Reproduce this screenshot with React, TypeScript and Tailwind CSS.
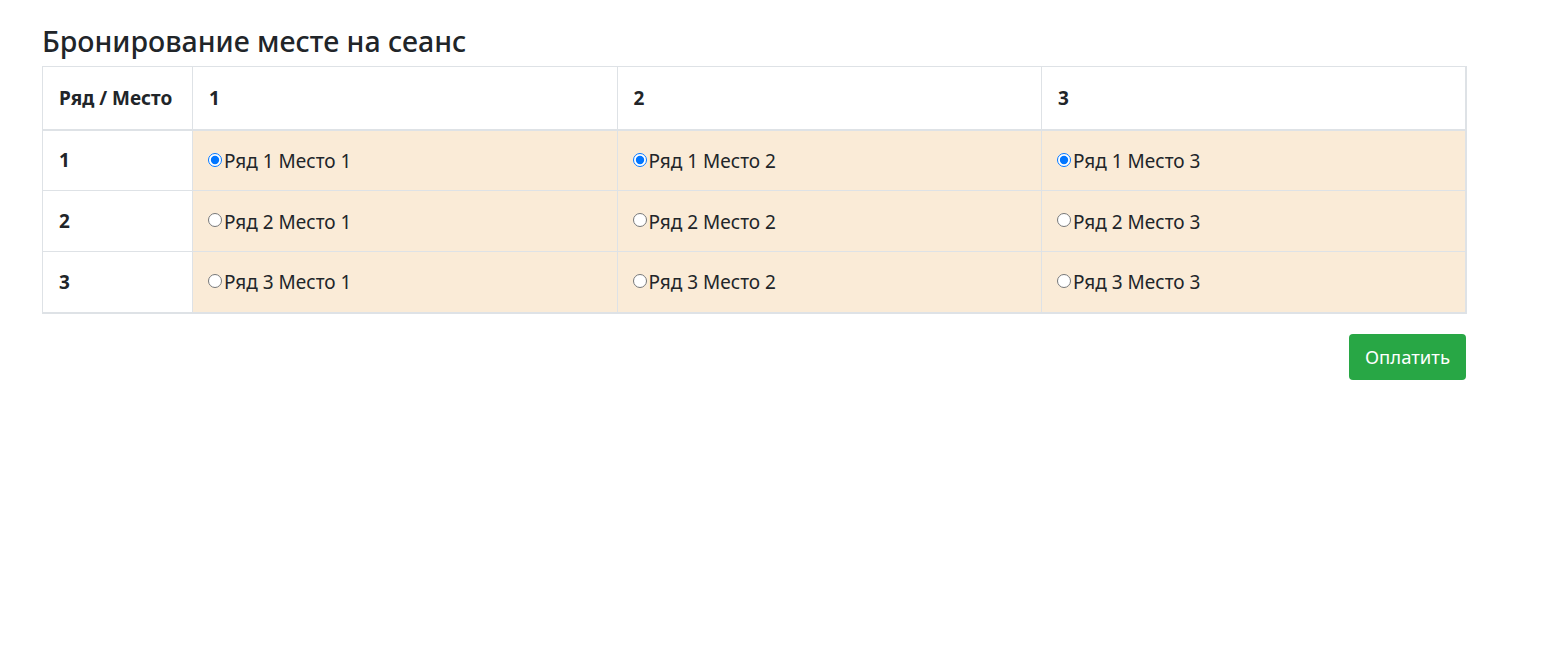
const rows = [1, 2, 3];
const seats = [1, 2, 3];

const font = { fontFamily: "'Noto Sans', 'Open Sans', sans-serif" };

export default function App() {
  return (
    <div className="min-h-[670px] bg-white text-[#212529]" style={font}>
      <div className="pl-[42px] pt-[24px] w-[1467px]">
        <h3 className="text-[28.5px] leading-[1.2] font-medium mb-2">Бронирование месте на сеанс</h3>

        <table className="w-full table-fixed border-collapse border border-r-2 border-b-2 border-[#dee2e6] text-[19px]">
          <thead>
            <tr className="h-[63px]">
              <th className="w-[150px] border border-[#dee2e6] border-b-2 px-4 text-left font-bold">Ряд / Место</th>
              {seats.map((s) => (
                <th key={s} className="border border-[#dee2e6] border-b-2 px-4 text-left font-bold">
                  {s}
                </th>
              ))}
            </tr>
          </thead>
          <tbody>
            {rows.map((r) => (
              <tr key={r} className="h-[61px]">
                <td className="border border-[#dee2e6] px-4 font-bold">{r}</td>
                {seats.map((s) => (
                  <td key={s} className="border border-[#dee2e6] bg-[#faebd7] px-4">
                    <label className="inline-flex items-center">
                      <input
                        type="radio"
                        name={`seat-${s}`}
                        defaultChecked={r === 1}
                        className="-ml-px mr-[2px] w-[14px] h-[14px] mb-[3px]"
                      />
                      <span>
                        Ряд {r} Место {s}
                      </span>
                    </label>
                  </td>
                ))}
              </tr>
            ))}
          </tbody>
        </table>

        <div className="flex justify-end mt-[20px] pr-px">
          <button className="h-[46px] w-[117px] rounded bg-[#28a745] text-white text-[18.5px]">Оплатить</button>
        </div>
      </div>
    </div>
  );
}
